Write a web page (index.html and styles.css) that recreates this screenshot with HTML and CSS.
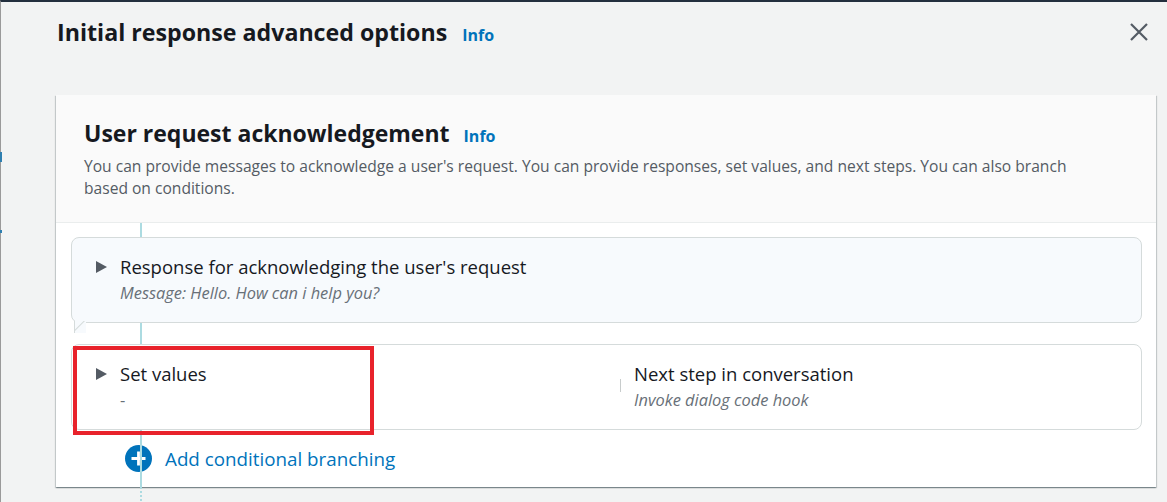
FILE: index.html
```html
<!DOCTYPE html>
<html>
<head>
<meta charset="utf-8">
<link rel="stylesheet" href="styles.css">
</head>
<body>
<div class="page">
  <div class="left-marks"><span class="mark m1"></span><span class="mark m2"></span></div>
  <header class="modal-header">
    <h1 class="modal-title">Initial response advanced options <a class="info">Info</a></h1>
    <button class="close" aria-label="Close">
      <svg width="20" height="20" viewBox="0 0 20 20"><path d="M2 2L18 18M18 2L2 18" stroke="#545b64" stroke-width="2.2" fill="none"/></svg>
    </button>
  </header>
  <section class="card">
    <div class="card-head">
      <h2 class="card-title">User request acknowledgement <a class="info">Info</a></h2>
      <p class="card-desc">You can provide messages to acknowledge a user's request. You can provide responses, set values, and next steps. You can also branch based on conditions.</p>
    </div>
    <div class="card-body">
      <div class="flow-line"></div>
      <div class="box box-response">
        <div class="row">
          <span class="caret"></span>
          <div>
            <div class="label">Response for acknowledging the user's request</div>
            <div class="sub">Message: Hello. How can i help you?</div>
          </div>
        </div>
        <span class="tail"></span>
      </div>
      <div class="box box-values">
        <div class="col col-left">
          <span class="caret"></span>
          <div>
            <div class="label">Set values</div>
            <div class="sub dash">-</div>
          </div>
        </div>
        <span class="divider"></span>
        <div class="col col-right">
          <div class="label">Next step in conversation</div>
          <div class="sub">Invoke dialog code hook</div>
        </div>
        <span class="highlight"></span>
      </div>
      <a class="add-branch">
        <svg width="27" height="27" viewBox="0 0 27 27"><circle cx="13.5" cy="13.5" r="13.5" fill="#0073bb"/><path d="M13.5 6.5V20.5M6.5 13.5H20.5" stroke="#fff" stroke-width="2.8"/></svg>
        <span>Add conditional branching</span>
      </a>
    </div>
  </section>
  <div class="dotted"></div>
</div>
</body>
</html>
```
FILE: styles.css
```css
* { box-sizing: border-box; }
html, body { margin: 0; padding: 0; }
body {
  background: #f2f3f3;
  font-family: "Open Sans", "Liberation Sans", Arial, sans-serif;
  color: #16191f;
  width: 1167px;
  height: 502px;
  overflow: hidden;
}
.page {
  position: relative;
  height: 502px;
  border-top: 2px solid #232f3e;
  border-left: 1px solid #9a9a9a;
}
.left-marks .mark {
  position: absolute;
  left: -1px;
  width: 2px;
  background: #2f7fb0;
}
.left-marks .m1 { top: 150px; height: 10px; }
.left-marks .m2 { top: 228px; height: 3px; }
.modal-header {
  display: flex;
  align-items: center;
  justify-content: space-between;
  height: 60px;
  padding: 0 18px 0 56px;
}
.modal-title {
  margin: 0;
  font-size: 23.2px;
  font-weight: 700;
  display: flex;
  align-items: baseline;
  gap: 15px;
}
.info {
  color: #0073bb;
  font-size: 16px;
  font-weight: 700;
}
.close {
  background: none;
  border: 0;
  padding: 0;
  width: 20px;
  height: 20px;
}
.card {
  position: relative;
  margin: 33px 0 0 55px;
  width: 1100px;
  height: 392px;
  background: #fff;
  box-shadow: 0 1px 1px 0 rgba(0,28,36,0.3), 1px 1px 1px 0 rgba(0,28,36,0.15), -1px 1px 1px 0 rgba(0,28,36,0.15);
}
.card-head {
  background: #fafafa;
  border-bottom: 1px solid #eaeded;
  height: 128px;
  padding: 22px 60px 0 28px;
}
.card-title {
  margin: 0;
  font-size: 23px;
  font-weight: 700;
  display: flex;
  align-items: baseline;
  gap: 14px;
  line-height: 32px;
}
.card-desc {
  margin: 3px 0 0;
  font-size: 15.6px;
  line-height: 22px;
  color: #545b64;
}
.card-body {
  position: relative;
  padding: 14px 14px 0 15px;
}
.flow-line {
  position: absolute;
  left: 84px;
  top: 0;
  width: 2px;
  background: #acdbe1;
  height: 264px;
}
.box {
  position: relative;
  border: 1px solid #d5dbdb;
  border-radius: 8px;
  background: #fff;
  height: 86px;
}
.box-response {
  background: #f7fafd;
  padding: 16px 22px;
}
.row, .col-left {
  display: flex;
  align-items: flex-start;
  gap: 13px;
}
.caret {
  margin-top: 7px;
  width: 0;
  height: 0;
  border-top: 6px solid transparent;
  border-bottom: 6px solid transparent;
  border-left: 11px solid #545b64;
  margin-left: 2px;
}
.label {
  font-size: 18.5px;
  line-height: 26px;
  color: #16191f;
}
.sub {
  font-size: 16.4px;
  font-style: italic;
  color: #687078;
  line-height: 22px;
  margin-top: 2px;
}
.dash { font-style: normal; }
.tail {
  position: absolute;
  left: 2px;
  bottom: -11px;
  width: 12px;
  height: 12px;
  background: #f7fafd;
  border-left: 1px solid #d5dbdb;
  overflow: hidden;
}
.tail::after {
  content: "";
  position: absolute;
  left: -1px;
  top: -6px;
  width: 16px;
  height: 16px;
  border-bottom: 1px solid #d5dbdb;
  transform: rotate(-45deg);
  transform-origin: left bottom;
}
.box-values {
  margin-top: 21px;
  display: flex;
  align-items: flex-start;
  padding: 16px 22px;
}
.col-left { width: 526px; }
.divider {
  width: 1px;
  height: 13px;
  background: #c8cccc;
  margin-top: 18px;
  margin-right: 13px;
}
.highlight {
  position: absolute;
  left: 1px;
  top: 1px;
  width: 301px;
  height: 89px;
  border: 4px solid #e8222b;
}
.add-branch {
  display: flex;
  align-items: center;
  gap: 13px;
  margin: 15px 0 0 54px;
  color: #0073bb;
  font-size: 18.8px;
}
.dotted {
  position: absolute;
  left: 139px;
  top: 485px;
  width: 2px;
  height: 20px;
  background: repeating-linear-gradient(to bottom, #acdbe1 0 2px, transparent 2px 4px);
}
```
